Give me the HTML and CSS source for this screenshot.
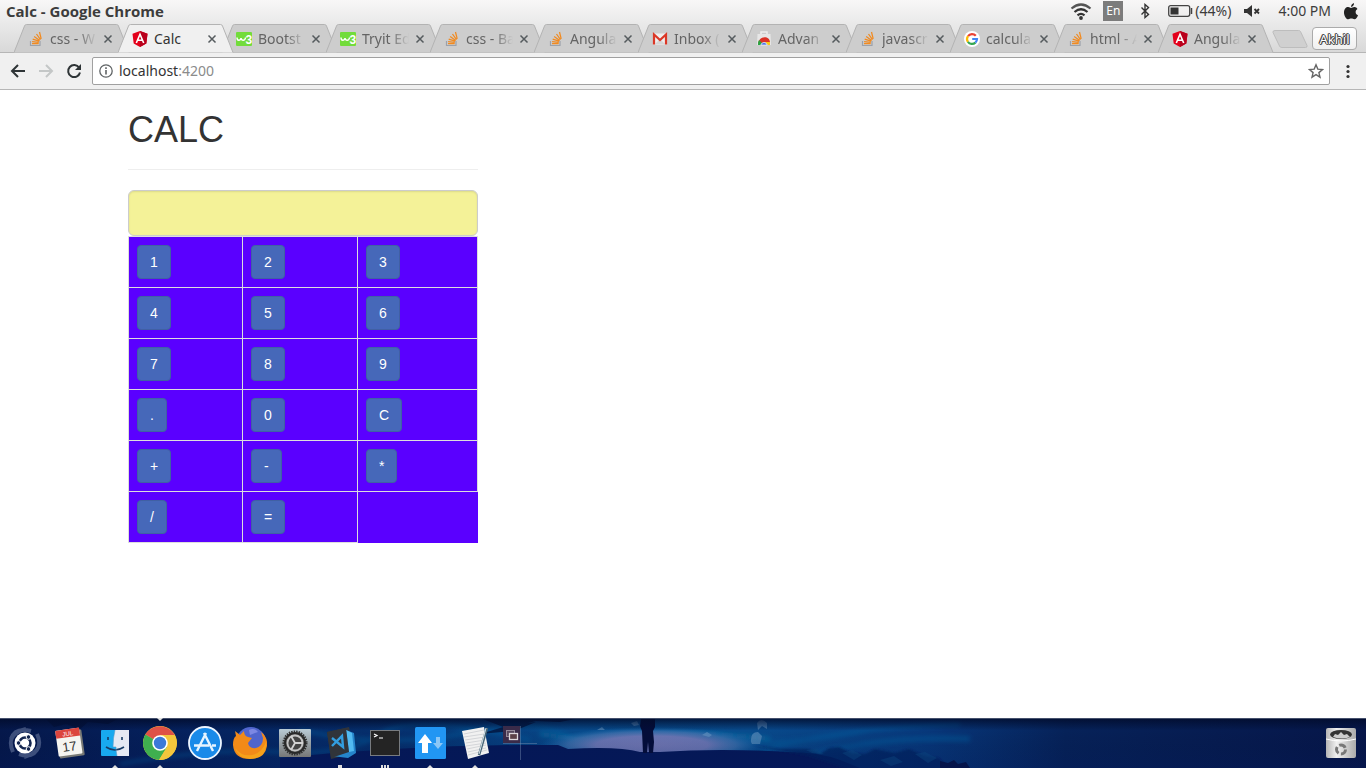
FILE: index.html
```html
<!DOCTYPE html>
<html lang="en">
<head>
<meta charset="utf-8">
<meta name="viewport" content="width=device-width, initial-scale=1">
<title>Calc</title>
<link rel="stylesheet" href="styles.css">
</head>
<body>
<svg class="sprite" aria-hidden="true">
  <symbol id="tab" viewBox="0 0 116 29" preserveAspectRatio="none"><path d="M0 28.500L10.500 2Q11 .5 12.500 .5H102.500Q104 .5 104.500 2L115 28.500"/></symbol>
  <symbol id="close" viewBox="0 0 10 10"><path d="M1.500 1.500l7 7M8.500 1.500l-7 7" stroke="#555b5e" stroke-width="1.500" fill="none"/></symbol>
  <symbol id="so" viewBox="0 0 16 16"><path d="M2.500 10v4.500h9.500V10" fill="none" stroke="#9ba1ab" stroke-width="1.200"/><path d="M4 12.600h6.700M4.100 10.600l6.700.8M4.700 8.200l6.400 2M6.200 5.500l5.500 3.900M8.500 3l4 5.600M11.500 1l1.700 6.800" fill="none" stroke="#f18a20" stroke-width="1.250"/></symbol>
  <symbol id="angular" viewBox="0 0 16 16"><path d="M8 0l7.500 2.700-1.200 9.800L8 16l-6.300-3.500L.5 2.700z" fill="#e3001b"/><path d="M8 0l7.500 2.700-1.200 9.800L8 16z" fill="#b9001c"/><path d="M4.300 12L8 3.300l3.700 8.700M5.700 9.200h4.600" fill="none" stroke="#fff" stroke-width="1.600"/></symbol>
  <symbol id="w3" viewBox="0 0 16 16"><rect y="1" width="16" height="14" rx="1" fill="#72dc3b"/><path d="M1 6.500q0 2.800 1.800 2.800T5 7q.3 2.300 2.200 2.300T9.500 6.500" fill="none" stroke="#fff" stroke-width="1.400"/><text x="9.500" y="12.500" font-family="Liberation Sans, sans-serif" font-size="12" font-weight="bold" fill="#fff">3</text></symbol>
  <symbol id="gmail" viewBox="0 0 16 16"><path d="M1 2.500h14v11H1z" fill="#eee"/><path d="M3 13l5-5 5 5z" fill="#d5d5d5"/><path d="M2 13.500V3.500l6 5.500 6-5.500v10" fill="none" stroke="#db3827" stroke-width="2.200"/></symbol>
  <symbol id="store" viewBox="0 0 16 16"><path d="M5 4V1h6v3" fill="none" stroke="#eee" stroke-width="1.500"/><path d="M1.500 3h13l.5 11H1z" fill="#e7e7e7"/><path d="M2 14C2 4 14 4 14 11.500H8z" fill="#dc3328"/><path d="M2 14q-.3-3 1-5l5 5z" fill="#27a642"/><path d="M14 11v3H9l1-3z" fill="#f8c91c"/><path d="M4.800 14a3.300 3.300 0 016.400 0z" fill="#3a67e5" stroke="#fff" stroke-width=".7"/></symbol>
  <symbol id="google" viewBox="0 0 16 16"><circle cx="8" cy="8" r="8" fill="#fff"/><g fill="none" stroke-width="2.200"><path d="M11.800 4.800A5 5 0 004 5.100" stroke="#ea4335"/><path d="M4 5.100a5 5 0 00-.1 5.700" stroke="#fbbc05"/><path d="M3.900 10.800a5 5 0 007.500.8" stroke="#34a853"/><path d="M8.200 8H13a5 5 0 01-1.600 3.600" stroke="#4285f4"/></g></symbol>
</svg>

<header class="menubar">
  <strong class="menubar-title">Calc - Google Chrome</strong>
  <div class="indicators">
    <svg class="wifi" viewBox="0 0 22 18" aria-label="Wi-Fi"><g fill="none" stroke-width="2.200"><path d="M1.500 6.500q9.500-8 19 0" stroke="#555"/><path d="M4.500 10q6.500-5.500 13 0M7.500 13.300q3.500-3 7 0" stroke="#333"/></g><circle cx="11" cy="16" r="1.900" fill="#333"/></svg>
    <span class="lang">En</span>
    <svg class="bluetooth" viewBox="0 0 10 16" aria-label="Bluetooth"><path d="M1.500 4.500l7 7L5 14.500v-13l3.500 3-7 7" fill="none" stroke="#333" stroke-width="1.400"/></svg>
    <span class="battery"><svg viewBox="0 0 25 12" aria-hidden="true"><rect x=".7" y=".7" width="21" height="10.600" rx="2" fill="none" stroke="#444" stroke-width="1.300"/><rect x="2.500" y="2.500" width="8" height="7" fill="#333"/><path d="M23.500 3v6" stroke="#444" stroke-width="1.500"/></svg>(44%)</span>
    <svg class="volume" viewBox="0 0 16 12" aria-label="Muted"><path d="M0 4h3l5-4v12L3 8H0z" fill="#333"/><path d="M10.500 4l4.500 4.500M15 4l-4.500 4.500" stroke="#333" stroke-width="1.800"/></svg>
    <time class="clock">4:00 PM</time>
    <svg class="apple" viewBox="0 0 14 18" aria-label="System menu"><path d="M10 1q.2 3-3 4 0-3 3-4zM7 6c1-.1 2-1 3.500-.9Q12.500 5.300 13.500 7c-3 1.700-2 5.500.5 6.300-.7 2-2 4-3.500 4-1.300 0-2-.7-3.200-.7s-1.800.7-3 .7C2 17.300 0 13.500 0 10.500 0 7 2 5 4.200 5 5.500 5 6.300 6 7 6z" fill="#222"/></svg>
  </div>
</header>

<nav class="tabstrip" aria-label="Tabs">
  <div class="tab"><svg class="shape"><use href="#tab"/></svg><div class="tab-body"><svg class="fav"><use href="#so"/></svg><span class="tab-title">css - W</span><button class="close" aria-label="Close"><svg><use href="#close"/></svg></button></div></div>
  <div class="tab active"><svg class="shape"><use href="#tab"/></svg><div class="tab-body"><svg class="fav"><use href="#angular"/></svg><span class="tab-title">Calc</span><button class="close" aria-label="Close"><svg><use href="#close"/></svg></button></div></div>
  <div class="tab"><svg class="shape"><use href="#tab"/></svg><div class="tab-body"><svg class="fav"><use href="#w3"/></svg><span class="tab-title">Bootst</span><button class="close" aria-label="Close"><svg><use href="#close"/></svg></button></div></div>
  <div class="tab"><svg class="shape"><use href="#tab"/></svg><div class="tab-body"><svg class="fav"><use href="#w3"/></svg><span class="tab-title">Tryit Ed</span><button class="close" aria-label="Close"><svg><use href="#close"/></svg></button></div></div>
  <div class="tab"><svg class="shape"><use href="#tab"/></svg><div class="tab-body"><svg class="fav"><use href="#so"/></svg><span class="tab-title">css - Ba</span><button class="close" aria-label="Close"><svg><use href="#close"/></svg></button></div></div>
  <div class="tab"><svg class="shape"><use href="#tab"/></svg><div class="tab-body"><svg class="fav"><use href="#so"/></svg><span class="tab-title">Angula</span><button class="close" aria-label="Close"><svg><use href="#close"/></svg></button></div></div>
  <div class="tab"><svg class="shape"><use href="#tab"/></svg><div class="tab-body"><svg class="fav"><use href="#gmail"/></svg><span class="tab-title">Inbox (</span><button class="close" aria-label="Close"><svg><use href="#close"/></svg></button></div></div>
  <div class="tab"><svg class="shape"><use href="#tab"/></svg><div class="tab-body"><svg class="fav"><use href="#store"/></svg><span class="tab-title">Advan</span><button class="close" aria-label="Close"><svg><use href="#close"/></svg></button></div></div>
  <div class="tab"><svg class="shape"><use href="#tab"/></svg><div class="tab-body"><svg class="fav"><use href="#so"/></svg><span class="tab-title">javascr</span><button class="close" aria-label="Close"><svg><use href="#close"/></svg></button></div></div>
  <div class="tab"><svg class="shape"><use href="#tab"/></svg><div class="tab-body"><svg class="fav"><use href="#google"/></svg><span class="tab-title">calcula</span><button class="close" aria-label="Close"><svg><use href="#close"/></svg></button></div></div>
  <div class="tab"><svg class="shape"><use href="#tab"/></svg><div class="tab-body"><svg class="fav"><use href="#so"/></svg><span class="tab-title">html - A</span><button class="close" aria-label="Close"><svg><use href="#close"/></svg></button></div></div>
  <div class="tab"><svg class="shape"><use href="#tab"/></svg><div class="tab-body"><svg class="fav"><use href="#angular"/></svg><span class="tab-title">Angula</span><button class="close" aria-label="Close"><svg><use href="#close"/></svg></button></div></div>
  <button class="newtab" aria-label="New tab"><svg viewBox="0 0 36 18"><path d="M3 .5h23.500q1.500 0 2 1l6.500 14q.5 2-1.500 2H10q-2 0-2.500-1.500L1 2.500Q.5.500 3 .5z" fill="#d0d0d0" stroke="#bdbdbd"/></svg></button>
  <button class="profile">Akhil</button>
</nav>

<div class="toolbar">
  <button class="tool" aria-label="Back"><svg viewBox="0 0 16 16"><path d="M15 8H2.500M8 2L2 8l6 6" fill="none" stroke="#2e3436" stroke-width="2"/></svg></button>
  <button class="tool" aria-label="Forward" disabled><svg viewBox="0 0 16 16"><path d="M1 8h12.500M8 2l6 6-6 6" fill="none" stroke="#c4c7c7" stroke-width="2"/></svg></button>
  <button class="tool" aria-label="Reload"><svg viewBox="0 0 16 16"><path d="M13.200 4.800A6 6 0 1014 9.500" fill="none" stroke="#2e3436" stroke-width="2"/><path d="M15 1v6H9z" fill="#2e3436"/></svg></button>
  <div class="omnibox">
    <svg class="info" viewBox="0 0 14 14" aria-hidden="true"><circle cx="7" cy="7" r="6.200" fill="none" stroke="#5f6365" stroke-width="1.300"/><path d="M7 6v4.500M7 3.300v1.600" stroke="#5f6365" stroke-width="1.600"/></svg>
    <a class="url" href="#">localhost<span>:4200</span></a>
    <button class="star" aria-label="Bookmark"><svg viewBox="0 0 16 16"><path d="M8 1.800l1.800 4.300 4.700.4-3.600 3.100 1.100 4.600L8 11.700l-4 2.500 1.100-4.600L1.500 6.500l4.700-.4z" fill="none" stroke="#666" stroke-width="1.400"/></svg></button>
  </div>
  <button class="tool more" aria-label="Menu"><svg viewBox="0 0 16 16"><g fill="#333"><circle cx="8" cy="3.500" r="1.600"/><circle cx="8" cy="8.500" r="1.600"/><circle cx="8" cy="13.500" r="1.600"/></g></svg></button>
</div>

<main class="page">
  <div class="calc">
    <h1>CALC</h1>
    <hr>
    <input class="display" type="text" aria-label="Result">
    <table class="keys">
      <colgroup><col class="c1"><col class="c2"><col></colgroup>
      <tbody>
      <tr><td><button>1</button></td><td><button>2</button></td><td><button>3</button></td></tr>
      <tr><td><button>4</button></td><td><button>5</button></td><td><button>6</button></td></tr>
      <tr><td><button>7</button></td><td><button>8</button></td><td><button>9</button></td></tr>
      <tr><td><button>.</button></td><td><button>0</button></td><td><button>C</button></td></tr>
      <tr><td><button>+</button></td><td><button>-</button></td><td><button>*</button></td></tr>
      <tr><td><button>/</button></td><td><button>=</button></td></tr>
      </tbody>
    </table>
  </div>
</main>

<footer class="dock">
  <svg class="wallpaper" viewBox="0 0 1366 50" preserveAspectRatio="none" aria-hidden="true">
    <defs>
      <linearGradient id="sky"><stop offset="0" stop-color="#05184b"/><stop offset=".12" stop-color="#05205c"/><stop offset=".3" stop-color="#05316f"/><stop offset=".42" stop-color="#07498a"/><stop offset=".55" stop-color="#084a8c"/><stop offset=".68" stop-color="#07377a"/><stop offset=".78" stop-color="#062259"/><stop offset="1" stop-color="#061649"/></linearGradient>
      <radialGradient id="glow"><stop offset="0" stop-color="#7278b5"/><stop offset=".5" stop-color="#6a76b4"/><stop offset=".75" stop-color="#3f71ae" stop-opacity=".8"/><stop offset="1" stop-color="#126bae" stop-opacity="0"/></radialGradient>
      <linearGradient id="shade" x2="0" y2="1"><stop offset="0" stop-color="#020c2b" stop-opacity=".85"/><stop offset=".25" stop-color="#020c2b" stop-opacity="0"/><stop offset="1" stop-color="#041656" stop-opacity=".25"/></linearGradient>
      <filter id="soft"><feGaussianBlur stdDeviation="2"/></filter>
      <filter id="edge"><feGaussianBlur stdDeviation="1"/></filter>
    </defs>
    <rect width="1366" height="50" fill="url(#sky)"/>
    <g filter="url(#soft)" fill="none" stroke="#0b65a5" stroke-opacity=".4" stroke-width="4">
      <path d="M120 46q90-16 160-12t100-18 150 6M300 12q90 20 170 2t110 14M760 34q70-24 200-28M790 42q80-24 180-20M720 22q60 8 150-10M860 26q50-8 110-6"/>
      <path d="M540 16q60 10 110 3t120 2" stroke="#1684b5"/>
    </g>
    <ellipse cx="652" cy="27" rx="112" ry="18" fill="url(#glow)"/>
    <path d="M280 40q120-12 240-13h38l10 4q50-3 72 3h20q60-4 128 0 30 0 52 8l20 8H280z" fill="#05195a"/>
    <g filter="url(#edge)"><path d="M750 27l30 4 28 0 12 5 9-6 10-1 12 6 14 1 10-5 20 4 14-4 16 7 14 2 11 12H850l-42-14z" fill="#06245f" opacity=".75"/></g>
    <g fill="#0b4c86" opacity=".5"><path d="M806 32l10-1 8 5-12-1zM842 35l10-3 10 5-8 5zM880 42l14-4 9 6-12 4zM915 36l10-2 12 6-9 5z"/></g>
    <g fill="#03133c" opacity=".8"><path d="M45 0h75l-12 6-20-2-8 7-14-5-12 3zM480 0h100l-20 4-24-1-30 7zM480 16l30-9 26-3-22 9z"/></g>
    <g fill="#6e9bc6" opacity=".55"><path d="M702 17l5-3 5 3-3 2zM631 5l6-2 2 4-5 1zM597 12l5-3 3 3z"/><path d="M751 24q-1-10 7-10l4 4-2 8h-8zM757 5q4-6 10 0v6l-5-3-4 4z"/></g>
    <path d="M641 1h14v8l-2 4 1 11-1 11h-4l-1-11-1 11h-4l-1-22-2-5z" fill="#040d39"/>
    <path d="M940 50v-7l8 2 6-3 4 4 8-2 4 6z" fill="#061448"/>
    <rect width="1366" height="50" fill="url(#shade)"/><rect width="1366" height="1" fill="#45506c"/>
  </svg>
  <div class="launchers">
    <button class="app" aria-label="Ubuntu"><svg viewBox="0 0 34 34"><g fill="none" stroke="#a7b5d3" stroke-opacity=".35" stroke-width="4"><path d="M5 26Q-3 8 18 3M29 8q8 17-13 23M3 13q4-12 20-8M31 20q-5 13-20 8"/></g><circle cx="17" cy="17" r="10.500" fill="#fff"/><circle cx="17" cy="17" r="5.500" fill="none" stroke="#142650" stroke-width="2.600"/><g fill="#142650" stroke="#fff"><circle cx="10.500" cy="17" r="2.300"/><circle cx="20.500" cy="11" r="2.300"/><circle cx="20.500" cy="23" r="2.300"/></g></svg></button>
    <button class="app" aria-label="Calendar"><svg viewBox="0 0 34 34"><g transform="rotate(-8 17 17)"><rect x="5" y="5" width="25" height="26" rx="1" fill="#787975"/><rect x="4" y="3" width="24" height="26" rx="1" fill="#f5f4f0"/><path d="M4 3h24v8H4z" fill="#dc453e"/><text x="16" y="9.500" text-anchor="middle" font-family="Liberation Sans, sans-serif" font-size="6" fill="#fff">JUL</text><text x="16" y="25" text-anchor="middle" font-family="Liberation Sans, sans-serif" font-size="13" fill="#333">17</text></g></svg></button>
    <button class="app open" aria-label="Files"><svg viewBox="0 0 34 34"><rect x="3" y="4" width="28" height="26" rx="1" fill="#18a9ef"/><path d="M17 4h14v26H19q-1-5-1-9h-3q0-9 2-17z" fill="#e5e9f3"/><path d="M10 11v3M24 11v3M8 21q9 6 18 0" fill="none" stroke="#173b65" stroke-width="1.600"/><path d="M17 4q-2 8-2 17h3q0 5 1 9" fill="none" stroke="#5a9cc8" stroke-width=".6"/></svg></button>
    <button class="app open current" aria-label="Chrome"><svg viewBox="0 0 34 34"><circle cx="17" cy="17" r="17" fill="#f4c63c"/><path d="M17 17L2.300 8.500A17 17 0 0131.700 9z" fill="#df5147"/><path d="M17 17L2.300 8.500A17 17 0 0016 34l8-13z" fill="#3faf4f"/><path d="M17 9h14.700a17 17 0 01-15.700 25l8-13z" fill="#f4c63c"/><circle cx="17" cy="17" r="7.800" fill="#fff"/><circle cx="17" cy="17" r="6.200" fill="#3c79d8"/></svg></button>
    <button class="app" aria-label="App Store"><svg viewBox="0 0 34 34"><circle cx="17" cy="17" r="16" fill="#198ae9" stroke="#eef6ff" stroke-width="1.800"/><path d="M18 7L9 25M16 7l9 18M6 19.500h15M24 19.500h4" fill="none" stroke="#e6f4ff" stroke-width="2.400"/></svg></button>
    <button class="app" aria-label="Firefox"><svg viewBox="0 0 34 34"><circle cx="18" cy="16" r="15" fill="#5065cd"/><path d="M2 5l5 4 4-4q0 5 4 6l4 1-4 5q1 6 8 5 7-2 7-10l-2-6q7 5 6 14-2 13-17 13Q1 33 0 19q0-7 3-9z" fill="#f28a18"/><path d="M2 22q7 9 17 7t14-13q1 17-16 17Q5 32 2 22z" fill="#f8b31d" opacity=".6"/><path d="M16 4q5-3 9 2l-3 1-5 2z" fill="#7c88e3"/></svg></button>
    <button class="app" aria-label="Settings"><svg viewBox="0 0 34 34"><defs><linearGradient id="metal" x2="0" y2="1"><stop stop-color="#b9cbd5"/><stop offset="1" stop-color="#777"/></linearGradient></defs><rect x="1" y="3" width="32" height="28" rx="1" fill="url(#metal)"/><circle cx="17" cy="17" r="11.500" fill="none" stroke="#333" stroke-width="2" stroke-dasharray="1.500 1"/><circle cx="17" cy="17" r="10" fill="#666" stroke="#292929" stroke-width="2"/><circle cx="17" cy="17" r="7.500" fill="#444" stroke="#c4c4c4" stroke-width="1.800"/><path d="M17 17h8M17 17l-4-7M17 17l-4 7" stroke="#d2d2d2" stroke-width="1.800"/></svg></button>
    <button class="app open square" aria-label="Code"><svg viewBox="0 0 34 34"><path d="M4 6l22-5 6 26-24 6z" fill="#30343a"/><path d="M23 4l8 3 2 20-8 5-16-2 14-4z" fill="#2585cb"/><path d="M23 4l3 22 5-1-2-18z" fill="#51baf0"/><path d="M4 6l19-4 3 24-18 6z" fill="#30343a"/><path d="M9 12l11 9-1-11L9 20" fill="none" stroke="#329ee0" stroke-width="2.400"/></svg></button>
    <button class="app open triple" aria-label="Terminal"><svg viewBox="0 0 34 34"><rect x="2.500" y="4.500" width="29" height="25" fill="#242424" stroke="#777b80"/><path d="M6 8l3 1.500L6 11M11 12h4" fill="none" stroke="#fff" stroke-width="1.200"/></svg></button>
    <button class="app open" aria-label="Transfers"><svg viewBox="0 0 34 34"><rect x="2" y="1" width="31" height="32" rx="1.500" fill="#2196f3"/><path d="M12 8l7 9h-4v10H9V17H5z" fill="#fff"/><path d="M25 23l-5-6h3v-6h4v6h3z" fill="#8bc7f6"/></svg></button>
    <button class="app open" aria-label="Notes"><svg viewBox="0 0 34 34"><path d="M4 5l22-4 5 26-21 6z" fill="#f1f1f1"/><path d="M6 8l20-4M6 11l20-3M7 14l20-3M8 17l19-3M8 20l20-3M9 23l19-4M10 26l18-4M10 29l19-5" stroke="#cbced2" stroke-width=".8"/><path d="M29 2L21 29" stroke="#486577" stroke-width="2.600"/><path d="M28 2l-7 26" stroke="#d5e2e8"/></svg></button>
  </div>
  <button class="workspaces" aria-label="Workspaces"><svg viewBox="0 0 34 34"><rect width="17" height="17" fill="#3a2b49"/><path d="M17.500 0v34M0 17.500h34" stroke="#8298ba" stroke-opacity=".4"/><rect x="3.500" y="4.500" width="8" height="6" fill="#58495e" stroke="#948999"/><rect x="6.500" y="7.500" width="8" height="6" fill="#5c4147" stroke="#ded8dc" stroke-width="1.300"/></svg></button>
  <button class="app trash" aria-label="Trash"><svg viewBox="0 0 34 34"><defs><linearGradient id="bin"><stop stop-color="#b5b5b5"/><stop offset=".35" stop-color="#f0f0f0"/><stop offset="1" stop-color="#aaa"/></linearGradient></defs><rect x="2" y="2" width="30" height="30" rx="2" fill="url(#bin)"/><ellipse cx="17" cy="8.500" rx="11" ry="4.500" fill="#333"/><path d="M9 11l2-3 3 1 3-3 3 3 3-1 3 3q-8 3-17 0z" fill="#ccc"/><path d="M2 13q15 4 30 0" fill="none" stroke="#fff"/><circle cx="17" cy="23.500" r="4.500" fill="none" stroke="#777" stroke-width="3" stroke-dasharray="7 2.400"/></svg></button>
</footer>
</body>
</html>
```
FILE: styles.css
```css
* { box-sizing: border-box; }

body {
  margin: 0;
  min-height: 100vh;
  display: flex;
  flex-direction: column;
  background: #fff;
  color: #333;
  font-family: "Noto Sans", "Open Sans", sans-serif;
  font-size: 14px;
}

button {
  padding: 0;
  border: 0;
  background: none;
  font: inherit;
}

svg { display: block; }
.sprite { display: none; }

/* System menu bar */
.menubar {
  height: 24px;
  padding: 0 8px 2px 6px;
  display: flex;
  align-items: center;
  justify-content: space-between;
  background: linear-gradient(#f8f7f7, #e9e9e9);
  color: #3c3c3c;
}
.menubar-title {
  font-family: "Open Sans", "Noto Sans", sans-serif;
  font-size: 15px;
  line-height: 20px;
  white-space: nowrap;
}
.indicators {
  display: flex;
  align-items: center;
  line-height: 20px;
  white-space: nowrap;
}
.wifi { width: 22px; height: 18px; margin-right: 11px; }
.lang {
  width: 20px;
  height: 20px;
  margin-right: 17px;
  background: #7c7c7c;
  color: #fff;
  font-size: 12px;
  text-align: center;
}
.bluetooth { width: 10px; height: 16px; margin-right: 18px; }
.battery { display: flex; align-items: center; gap: 2px; margin-right: 13px; }
.battery svg { width: 25px; height: 12px; }
.volume { width: 16px; height: 12px; margin-right: 18px; }
.clock { margin-right: 13px; }
.apple { width: 14px; height: 18px; }

/* Browser tabs */
.tabstrip {
  height: 29px;
  padding: 0 9px 0 14px;
  display: flex;
  background: linear-gradient(#e9e9e9, #d8d8d8);
  box-shadow: inset 0 -1px #b6b6b6;
}
.tab {
  flex: 0 1 116px;
  min-width: 0;
  height: 29px;
  display: grid;
  color: #646464;
}
.tab + .tab { margin-left: -12px; }
.tab > * { grid-area: 1 / 1; }
.shape {
  width: 100%;
  height: 29px;
  fill: #cdcdcd;
  stroke: #b3b3b3;
}
.active { z-index: 1; color: #333; }
.active .shape { fill: #f0f0f0; }
.tab-body {
  min-width: 0;
  padding: 0 17px 0 14px;
  display: flex;
  align-items: center;
}
.fav { flex: none; width: 16px; height: 16px; margin-right: 6px; }
.tab-title {
  flex: 1;
  min-width: 0;
  margin-right: 6px;
  overflow: hidden;
  font-size: 14px;
  white-space: nowrap;
  -webkit-mask-image: linear-gradient(90deg, #000 60%, transparent);
  mask-image: linear-gradient(90deg, #000 60%, transparent);
}
.active .tab-title { -webkit-mask-image: none; mask-image: none; }
.close, .close svg { width: 10px; height: 10px; }
.newtab { align-self: center; margin-left: -2px; }
.newtab svg { width: 36px; height: 18px; }
.profile {
  align-self: center;
  width: 45px;
  height: 23px;
  margin-left: auto;
  border: 1px solid #ababab;
  border-radius: 4px;
  background: linear-gradient(#fff, #f0f0f0);
  color: #fff;
  font-size: 13px;
  line-height: 20px;
  text-shadow: 1px 0 #444, -1px 0 #444, 0 1px #444, 0 -1px #444, 1px 1px #777, -1px -1px #777;
}

/* Address row */
.toolbar {
  height: 37px;
  padding: 0 10px;
  display: flex;
  align-items: center;
  gap: 12px;
  border-bottom: 1px solid #b6b6b6;
  background: #f0f0f0;
}
.tool svg { width: 16px; height: 16px; }
.omnibox {
  flex: 1;
  height: 28px;
  margin-left: -2px;
  padding: 0 5px 0 6px;
  display: flex;
  align-items: center;
  border: 1px solid #a0a0a0;
  border-radius: 2px;
  background: #fff;
}
.info { width: 14px; height: 14px; margin-right: 6px; }
.url { flex: 1; color: #333; line-height: 20px; text-decoration: none; }
.url span { color: #8b8b8b; }
.star svg { width: 16px; height: 16px; }
.more { margin-left: -2px; }

/* Page */
.page {
  flex: 1;
  width: 100%;
  max-width: 1170px;
  margin: 0 auto;
  padding: 20px 30px;
  font-family: "Liberation Sans", Arial, sans-serif;
}
.calc { max-width: 350px; }
h1 {
  margin: 0;
  font-size: 36px;
  font-weight: 500;
  line-height: 39px;
}
hr {
  margin: 20px 0;
  border: 0;
  border-top: 1px solid #eee;
}
.display {
  display: block;
  width: 100%;
  height: 46px;
  padding: 10px 16px;
  border: 1px solid #ccc;
  border-radius: 6px;
  background: #f4f298;
  box-shadow: inset 0 1px 2px rgba(0, 0, 0, .1);
  font-size: 18px;
}
.keys {
  width: 100%;
  table-layout: fixed;
  border-collapse: collapse;
  background: #5a00ff;
}
.c1 { width: 114px; }
.c2 { width: 115px; }
.keys td {
  padding: 8px;
  border: 1px solid #ddd;
  line-height: 20px;
  vertical-align: top;
}
.keys button {
  display: block;
  padding: 6px 12px;
  border: 1px solid #4060a4;
  border-radius: 4px;
  background: #4668b9;
  color: #fff;
}

/* Dock */
.dock {
  position: relative;
  height: 50px;
  padding: 0 8px;
  display: flex;
  align-items: center;
  background: #061b52;
}
.wallpaper {
  position: absolute;
  inset: 0;
  width: 100%;
  height: 100%;
}
.launchers { display: flex; gap: 11px; }
.app {
  position: relative;
  width: 34px;
  height: 50px;
  display: flex;
  align-items: center;
}
.app svg, .workspaces svg { width: 34px; height: 34px; }
.open::after, .current::before {
  content: "";
  position: absolute;
  left: 14px;
  bottom: 0;
  width: 6px;
  height: 3px;
  background: #ddd;
  clip-path: polygon(50% 0, 100% 100%, 0 100%);
}
.current::before { top: 0; bottom: auto; clip-path: polygon(0 0, 100% 0, 50% 100%); }
.square::after { left: 15px; width: 4px; clip-path: none; }
.triple::after {
  width: 8px;
  left: 13px;
  clip-path: none;
  background: repeating-linear-gradient(90deg, #ddd 0 2px, transparent 2px 3px);
}
.workspaces { position: relative; margin-left: 11px; }
.trash { margin-left: auto; }
```
